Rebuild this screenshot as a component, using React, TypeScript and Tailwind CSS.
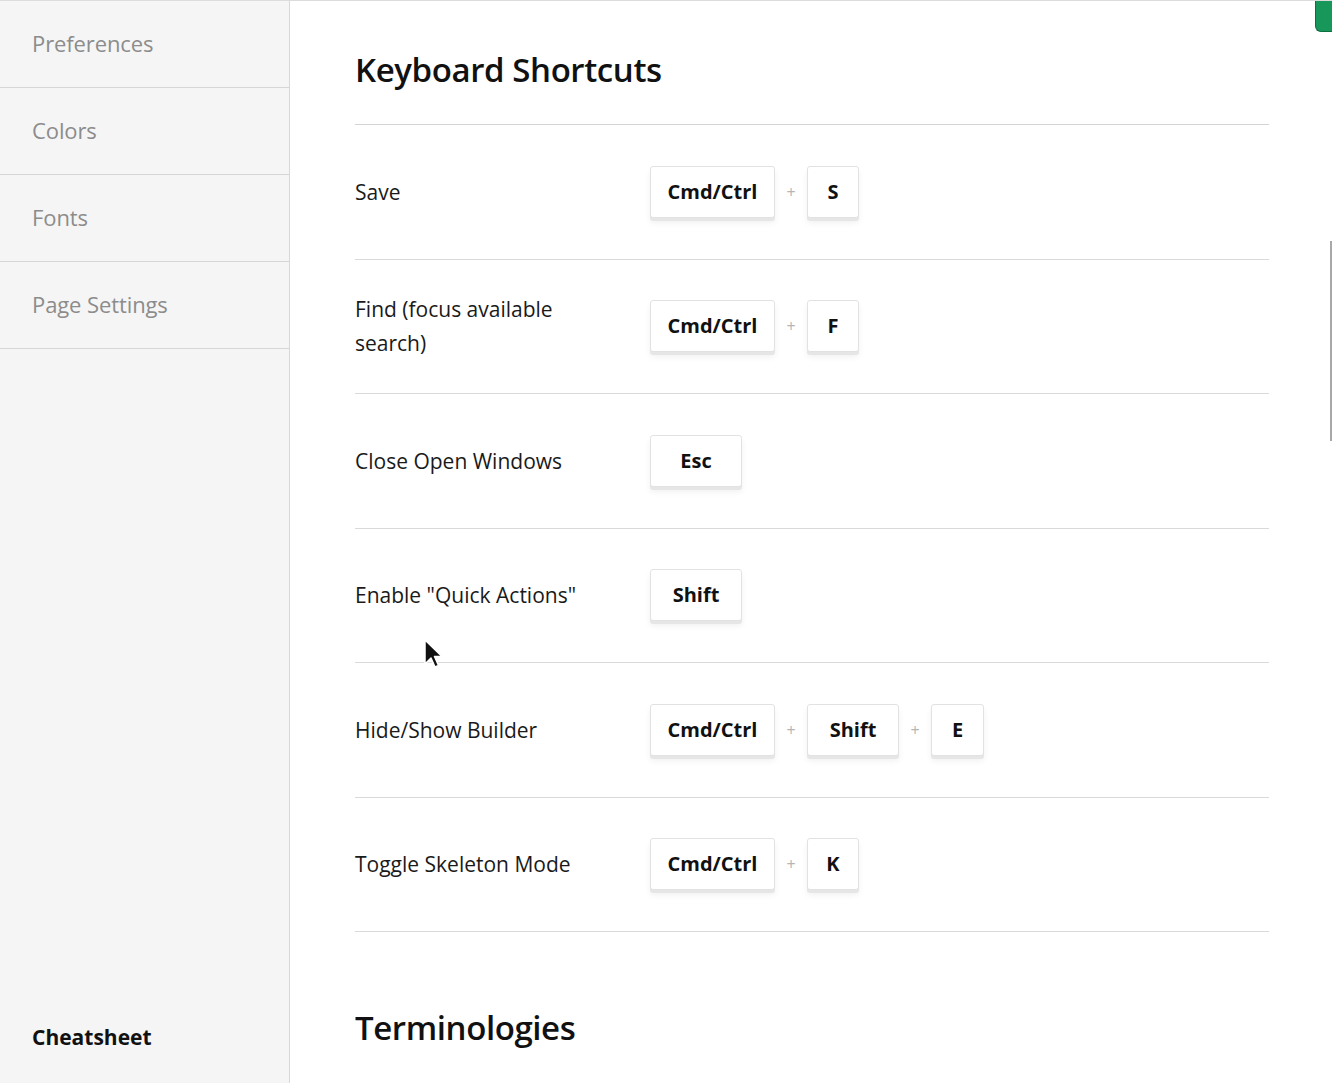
import React from 'react'

const font = { fontFamily: '"Open Sans", "Noto Sans", sans-serif' }

type Key = { label: string; width: string }

interface Shortcut {
  name: string
  keys: Key[]
}

const cmd: Key = { label: 'Cmd/Ctrl', width: 'w-[125px]' }
const shift: Key = { label: 'Shift', width: 'w-[92px]' }

const shortcuts: Shortcut[] = [
  { name: 'Save', keys: [cmd, { label: 'S', width: 'w-[52px]' }] },
  { name: 'Find (focus available search)', keys: [cmd, { label: 'F', width: 'w-[52px]' }] },
  { name: 'Close Open Windows', keys: [{ label: 'Esc', width: 'w-[92px]' }] },
  { name: 'Enable "Quick Actions"', keys: [shift] },
  { name: 'Hide/Show Builder', keys: [cmd, shift, { label: 'E', width: 'w-[53px]' }] },
  { name: 'Toggle Skeleton Mode', keys: [cmd, { label: 'K', width: 'w-[52px]' }] },
]

const navItems = ['Preferences', 'Colors', 'Fonts', 'Page Settings']

function KeyCap({ k }: { k: Key }) {
  return (
    <div
      className={`${k.width} h-[52px] flex items-center justify-center bg-white border border-[#e2e2e2] rounded-[3px] shadow-[0_3px_0_#e6e6e6,0_5px_6px_rgba(0,0,0,0.06)] text-[20px] font-bold text-[#111]`}
    >
      {k.label}
    </div>
  )
}

export default function App() {
  return (
    <div className="relative flex h-[1083px] w-[1332px] overflow-hidden bg-white border-t border-[#dcdcdc]" style={font}>
      <aside className="w-[290px] shrink-0 flex flex-col bg-[#f5f5f5] border-r border-[#d8d8d8]">
        {navItems.map((item) => (
          <div
            key={item}
            className="h-[87px] flex items-center px-8 pb-[2px] border-b border-[#d6d6d6] text-[22px] font-medium tracking-[-0.1px] text-[#8c8c8c]"
          >
            {item}
          </div>
        ))}
        <div className="mt-auto px-8 pb-[30px] text-[21px] font-bold text-[#111]">Cheatsheet</div>
      </aside>

      <main className="flex-1 pl-[65px] pr-[63px]">
        <div className="h-[124px] flex items-center pt-[14px] border-b border-[#d4d4d4]">
          <h1 className="text-[33px] font-semibold text-[#111] tracking-[-0.4px]">Keyboard Shortcuts</h1>
        </div>

        {shortcuts.map((s) => (
          <div key={s.name} className="h-[134.5px] flex items-center border-b border-[#d9d9d9]">
            <div className="w-[295px] pr-[50px] text-[21px] leading-[34px] text-[#1a1a1a]">{s.name}</div>
            <div className="flex items-center">
              {s.keys.map((k, i) => (
                <React.Fragment key={i}>
                  {i > 0 && <span className="w-[32px] text-center text-[16px] text-[#b5b5b5]">+</span>}
                  <KeyCap k={k} />
                </React.Fragment>
              ))}
            </div>
          </div>
        ))}

        <h2 className="mt-[71px] text-[33px] font-semibold text-[#111] tracking-[-0.4px]">Terminologies</h2>
      </main>

      {/* green tab at the top right */}
      <div className="absolute top-0 right-0 w-[17px] h-[31px] bg-[#17975a] rounded-bl-[6px] border-l border-b border-[#0d6e3f]" />
      {/* scrollbar sliver */}
      <div className="absolute right-0 top-[240px] w-[2px] h-[200px] bg-[#a8a8a8]" />

      {/* mouse cursor */}
      <svg className="absolute left-[423px] top-[637px]" width="22" height="32" viewBox="0 0 22 32">
        <path d="M2 2 L2 26 L8 20 L12 29 L15.5 27.5 L11.5 18.5 L19 18.5 Z" fill="#111" stroke="#fff" strokeWidth="1.5" strokeLinejoin="round" />
      </svg>
    </div>
  )
}
